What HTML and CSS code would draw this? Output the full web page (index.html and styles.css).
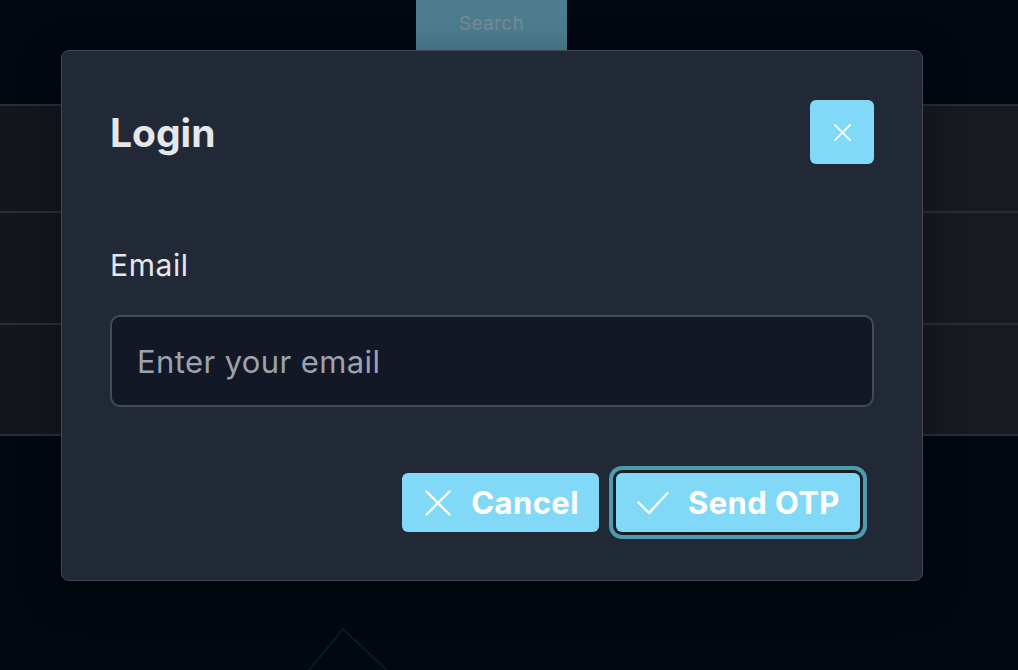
FILE: index.html
```html
<!DOCTYPE html>
<html lang="en">
<head>
<meta charset="utf-8">
<title>Login</title>
<link rel="stylesheet" href="styles.css">
</head>
<body>
<div class="page">
  <div class="topbar">
    <button class="search-btn" type="button">Search</button>
  </div>
  <div class="rows">
    <div class="row"></div>
    <div class="row"></div>
    <div class="row"></div>
  </div>
  <svg class="deco" width="1018" height="120" viewBox="0 0 1018 120">
    <path d="M305 125 L343 79 L392 125" fill="none" stroke="#061a29" stroke-width="2"/>
  </svg>

  <div class="modal" role="dialog" aria-labelledby="login-title">
    <div class="modal-header">
      <h2 id="login-title" class="modal-title">Login</h2>
      <button class="close-btn" type="button" aria-label="Close">
        <svg width="20" height="20" viewBox="0 0 20 20"><path d="M2 2 L18 18 M18 2 L2 18" stroke="#ffffff" stroke-width="2" stroke-linecap="round"/></svg>
      </button>
    </div>
    <label class="field-label" for="email">Email</label>
    <input class="field-input" id="email" type="email" placeholder="Enter your email">
    <div class="actions">
      <button class="btn" type="button">
        <svg width="26" height="26" viewBox="0 0 26 26"><path d="M1.5 1.5 L24.5 24.5 M24.5 1.5 L1.5 24.5" stroke="#ffffff" stroke-width="2.4" stroke-linecap="round"/></svg>
        <span>Cancel</span>
      </button>
      <button class="btn btn-focus" type="button">
        <svg width="32" height="24" viewBox="0 0 32 24"><path d="M1.5 11.5 L12 22 L30.5 2" fill="none" stroke="#ffffff" stroke-width="2.4" stroke-linecap="round" stroke-linejoin="round"/></svg>
        <span>Send OTP</span>
      </button>
    </div>
  </div>
</div>
</body>
</html>
```

FILE: styles.css
```css
* { box-sizing: border-box; }

html, body {
  margin: 0;
  padding: 0;
}

body {
  background: #010810;
  font-family: "Inter", "Noto Sans", "Liberation Sans", sans-serif;
  width: 1018px;
  height: 670px;
  overflow: hidden;
}

.page {
  position: relative;
  width: 1018px;
  height: 670px;
}

.topbar {
  display: flex;
  padding-left: 416px;
  height: 50px;
}

.search-btn {
  width: 151px;
  height: 50px;
  border: none;
  margin: 0;
  background: #4d7d8f;
  color: #7c8a91;
  font-family: "Inter", sans-serif;
  font-size: 19px;
  letter-spacing: 0.3px;
  padding: 0 0 4px;
}

.rows {
  margin-top: 54px;
  display: flex;
  flex-direction: column;
}

.row {
  border-top: 2px solid #2a2d35;
  background: linear-gradient(90deg, #13161d, #171a21);
  height: 107px;
}

.row:nth-child(2) { height: 112px; }

.row:last-child {
  height: 113px;
  border-bottom: 2px solid #2a2d35;
}

.deco {
  position: absolute;
  left: 0;
  top: 550px;
}

.modal {
  position: absolute;
  left: 61px;
  top: 50px;
  width: 862px;
  height: 531px;
  background: #222936;
  border: 1px solid #434957;
  border-radius: 8px;
  padding: 49px 48px 48px 48px;
  display: flex;
  flex-direction: column;
  box-shadow: 0 10px 40px rgba(0, 0, 0, 0.35);
}

.modal-header {
  display: flex;
  align-items: center;
  justify-content: space-between;
  height: 64px;
}

.modal-title {
  margin: 0;
  color: #e5e7eb;
  font-size: 39px;
  font-weight: 700;
  letter-spacing: 0;
}

.close-btn {
  width: 64px;
  height: 64px;
  border: none;
  border-radius: 6px;
  background: #82d9f7;
  display: flex;
  align-items: center;
  justify-content: center;
  padding: 0;
}

.close-btn svg { width: 19px; height: 19px; }

.field-label {
  margin-top: 83px;
  color: #e5e7eb;
  font-size: 30px;
  letter-spacing: 0.6px;
  line-height: 36px;
}

.field-input {
  margin-top: 32px;
  height: 92px;
  width: 100%;
  background: #131826;
  border: 2px solid #444b59;
  border-radius: 10px;
  padding: 0 25px;
  color: #e5e7eb;
  font-family: "Inter", sans-serif;
  font-size: 31px;
  letter-spacing: 0.4px;
  outline: none;
}

.field-input::placeholder {
  color: #9ca3af;
}

.actions {
  margin-top: 66px;
  display: flex;
  justify-content: flex-end;
  align-items: center;
  gap: 17px;
  padding-right: 14px;
}

.btn {
  height: 59px;
  border: none;
  border-radius: 6px;
  background: #82d9f7;
  color: #ffffff;
  font-family: "Inter", sans-serif;
  font-size: 31px;
  font-weight: 700;
  letter-spacing: 0.4px;
  display: flex;
  align-items: center;
  gap: 20px;
  padding: 0 20px 0 23px;
}

.btn-focus {
  width: 244px;
  padding: 0 20px 0 21px;
  gap: 19px;
  box-shadow: 0 0 0 3px #1b1e25, 0 0 0 7px #4e9bb1;
}
```
